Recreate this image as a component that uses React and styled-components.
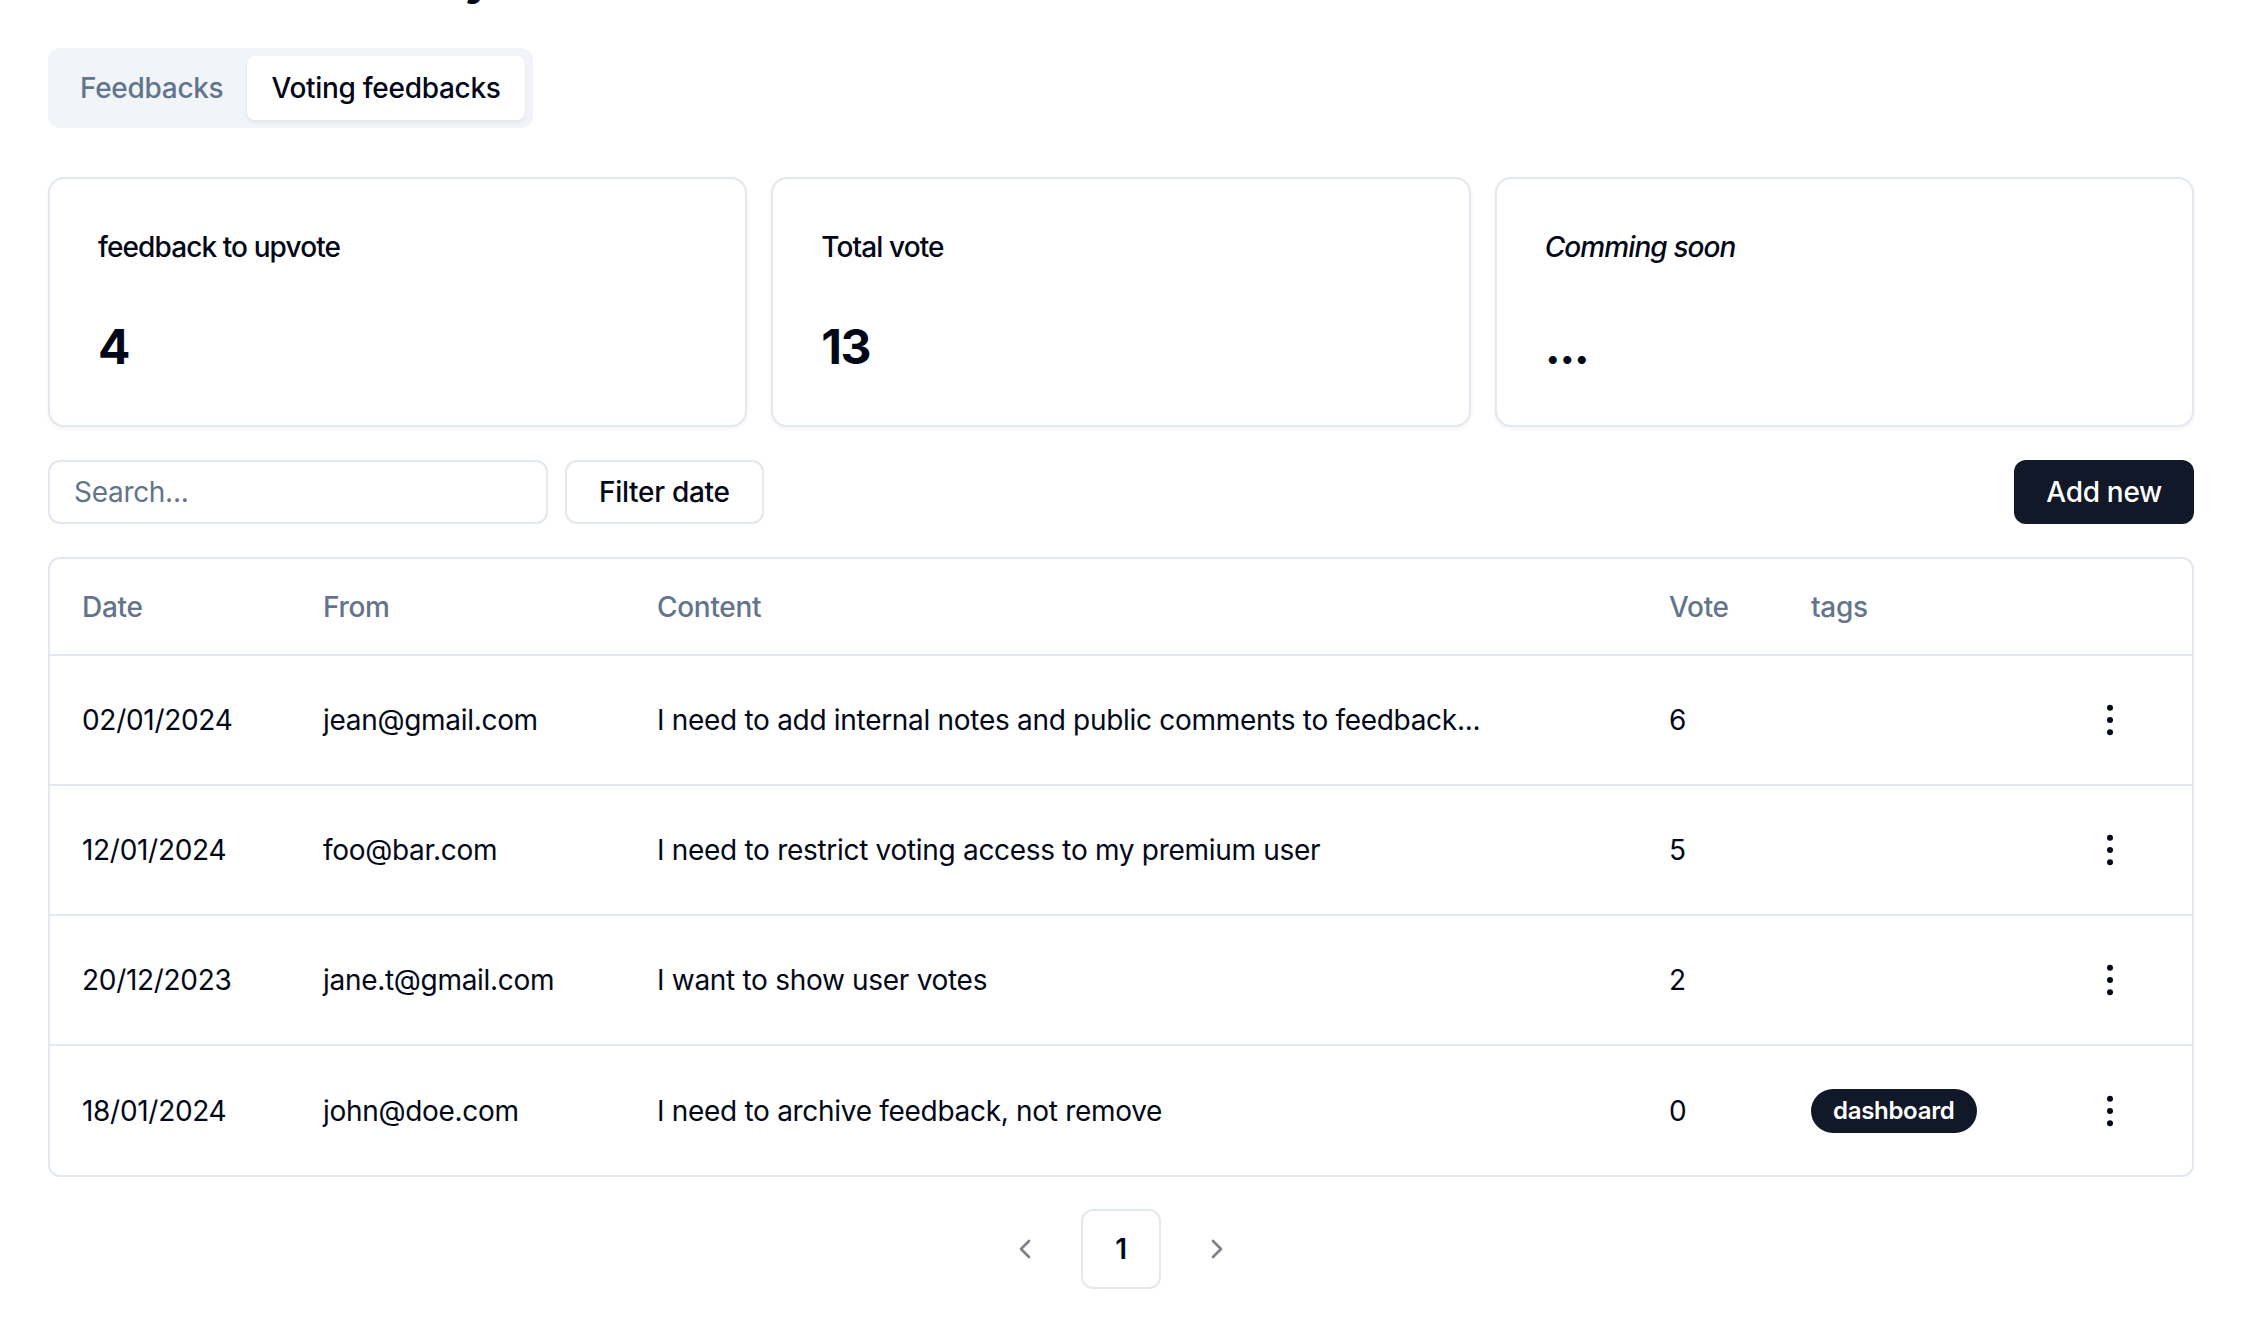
import React from "react";
import styled, { createGlobalStyle } from "styled-components";
import { ChevronLeft, ChevronRight } from "lucide-react";

const GlobalStyle = createGlobalStyle`
  * { box-sizing: border-box; }
  body {
    margin: 0;
    background: #ffffff;
    color: #020817;
    font-family: Inter, "Noto Sans", "Liberation Sans", sans-serif;
    letter-spacing: -0.3px;
    overflow: hidden;
  }
  button, input { letter-spacing: inherit; }
`;

const stats = [
    { title: "feedback to upvote", value: "4" },
    { title: "Total vote", value: "13" },
    { title: "Comming soon", value: "...", italic: true },
];

const feedbacks = [
    { date: "02/01/2024", from: "jean@gmail.com", content: "I need to add internal notes and public comments to feedback...", vote: 6, tags: [] },
    { date: "12/01/2024", from: "foo@bar.com", content: "I need to restrict voting access to my premium user", vote: 5, tags: [] },
    { date: "20/12/2023", from: "jane.t@gmail.com", content: "I want to show user votes", vote: 2, tags: [] },
    { date: "18/01/2024", from: "john@doe.com", content: "I need to archive feedback, not remove", vote: 0, tags: ["dashboard"] },
];

const KebabIcon = () => (
    <svg width="32" height="32" viewBox="0 0 32 32" fill="#020817">
        <circle cx="16" cy="3.8" r="3" />
        <circle cx="16" cy="16" r="3" />
        <circle cx="16" cy="28.2" r="3" />
    </svg>
);

const App = () => {
    return (
        <Page>
            <GlobalStyle />
            <Heading>Feedback Summary</Heading>

            <TabsList>
                <TabTrigger>Feedbacks</TabTrigger>
                <TabTrigger $active>Voting feedbacks</TabTrigger>
            </TabsList>

            <StatsGrid>
                {stats.map((s) => (
                    <Card key={s.title}>
                        <CardTitle $italic={s.italic}>{s.title}</CardTitle>
                        <CardValue>{s.value}</CardValue>
                    </Card>
                ))}
            </StatsGrid>

            <Toolbar>
                <SearchInput placeholder="Search..." />
                <OutlineButton>Filter date</OutlineButton>
                <PrimaryButton>Add new</PrimaryButton>
            </Toolbar>

            <TableWrap>
                <Table>
                    <thead>
                        <HeadRow>
                            <Th $w="241px">Date</Th>
                            <Th $w="334px">From</Th>
                            <Th $w="1012px">Content</Th>
                            <Th $w="142px">Vote</Th>
                            <Th $w="267px">tags</Th>
                            <Th />
                        </HeadRow>
                    </thead>
                    <tbody>
                        {feedbacks.map((f) => (
                            <Row key={f.date + f.from}>
                                <Td>{f.date}</Td>
                                <Td>{f.from}</Td>
                                <Td>{f.content}</Td>
                                <Td>{f.vote}</Td>
                                <Td>
                                    {f.tags.map((t) => (
                                        <Badge key={t}>{t}</Badge>
                                    ))}
                                </Td>
                                <Td>
                                    <IconButton aria-label="actions">
                                        <KebabIcon />
                                    </IconButton>
                                </Td>
                            </Row>
                        ))}
                    </tbody>
                </Table>
            </TableWrap>

            <Pagination>
                <PageArrow aria-label="previous">
                    <ChevronLeft size={32} strokeWidth={2} />
                </PageArrow>
                <PageNumber>1</PageNumber>
                <PageArrow aria-label="next">
                    <ChevronRight size={32} strokeWidth={2} />
                </PageArrow>
            </Pagination>
        </Page>
    );
};

const Page = styled.div`
  padding: 0 48px 48px 48px;
  display: flex;
  flex-direction: column;
`;

const Heading = styled.h1`
  margin: -55px 0 39px 0;
  font-size: 48px;
  line-height: 64px;
  font-weight: 700;
  letter-spacing: -1.4px;
  color: #020817;
`;

const TabsList = styled.div`
  align-self: flex-start;
  display: inline-flex;
  align-items: center;
  height: 80px;
  padding: 8px;
  border-radius: 12px;
  background: #f1f5f9;
`;

const TabTrigger = styled.button`
  height: 64px;
  padding: 0 24px;
  border: none;
  border-radius: 8px;
  font-family: inherit;
  font-size: 28px;
  font-weight: 500;
  color: ${(p) => (p.$active ? "#020817" : "#64748b")};
  background: ${(p) => (p.$active ? "#ffffff" : "transparent")};
  box-shadow: ${(p) => (p.$active ? "0 2px 4px rgba(15, 23, 42, 0.08)" : "none")};
  cursor: pointer;
`;

const StatsGrid = styled.div`
  margin-top: 49px;
  display: grid;
  grid-template-columns: repeat(3, 1fr);
  gap: 24px;
`;

const Card = styled.div`
  height: 250px;
  padding: 48px;
  border: 2px solid #e2e8f0;
  border-radius: 16px;
  background: #ffffff;
  box-shadow: 0 2px 4px rgba(15, 23, 42, 0.05);
  display: flex;
  flex-direction: column;
`;

const CardTitle = styled.div`
  font-size: 28px;
  line-height: 40px;
  font-weight: 500;
  letter-spacing: -0.9px;
  font-style: ${(p) => (p.$italic ? "italic" : "normal")};
`;

const CardValue = styled.div`
  margin-top: 48px;
  font-size: 48px;
  line-height: 64px;
  font-weight: 700;
  letter-spacing: -1.5px;
`;

const Toolbar = styled.div`
  margin-top: 33px;
  display: flex;
  align-items: center;
  gap: 17px;
`;

const SearchInput = styled.input`
  width: 500px;
  height: 64px;
  padding: 0 24px;
  border: 2px solid #e2e8f0;
  border-radius: 12px;
  font-family: inherit;
  font-size: 28px;
  color: #020817;
  outline: none;
  &::placeholder {
    color: #64748b;
  }
`;

const OutlineButton = styled.button`
  height: 64px;
  padding: 0 32px;
  border: 2px solid #e2e8f0;
  border-radius: 12px;
  background: #ffffff;
  font-family: inherit;
  font-size: 28px;
  font-weight: 500;
  color: #020817;
`;

const PrimaryButton = styled.button`
  margin-left: auto;
  height: 64px;
  padding: 0 32px;
  border: none;
  border-radius: 12px;
  background: #111827;
  font-family: inherit;
  font-size: 28px;
  font-weight: 500;
  color: #ffffff;
`;

const TableWrap = styled.div`
  margin-top: 33px;
  border: 2px solid #e2e8f0;
  border-radius: 12px;
  overflow: hidden;
`;

const Table = styled.table`
  width: 100%;
  border-collapse: collapse;
  table-layout: fixed;
  font-size: 28px;
`;

const HeadRow = styled.tr`
  border-bottom: 2px solid #e2e8f0;
`;

const Th = styled.th`
  width: ${(p) => p.$w || "auto"};
  height: 96px;
  padding: 0 32px;
  text-align: left;
  font-weight: 500;
  color: #64748b;
`;

const Row = styled.tr`
  border-bottom: 2px solid #e2e8f0;
  &:last-child {
    border-bottom: none;
  }
`;

const Td = styled.td`
  height: 130px;
  padding: 0 32px;
  vertical-align: middle;
  line-height: 40px;
  color: #020817;
  white-space: nowrap;
  overflow: hidden;
`;

const Badge = styled.span`
  display: inline-flex;
  align-items: center;
  height: 44px;
  padding: 0 20px;
  border: 2px solid transparent;
  border-radius: 999px;
  background: #111827;
  color: #ffffff;
  font-size: 24px;
  font-weight: 600;
`;

const IconButton = styled.button`
  width: 64px;
  height: 64px;
  display: flex;
  align-items: center;
  justify-content: center;
  border: none;
  border-radius: 12px;
  background: transparent;
  padding: 0;
`;

const Pagination = styled.nav`
  margin-top: 32px;
  display: flex;
  justify-content: center;
  align-items: center;
  gap: 16px;
`;

const PageArrow = styled.button`
  width: 80px;
  height: 80px;
  display: flex;
  align-items: center;
  justify-content: center;
  border: none;
  background: transparent;
  color: #020817;
  opacity: 0.5;
  padding: 0;
`;

const PageNumber = styled.button`
  width: 80px;
  height: 80px;
  border: 2px solid #e2e8f0;
  border-radius: 12px;
  background: #ffffff;
  font-family: inherit;
  font-size: 28px;
  font-weight: 600;
  color: #020817;
`;

export default App;
